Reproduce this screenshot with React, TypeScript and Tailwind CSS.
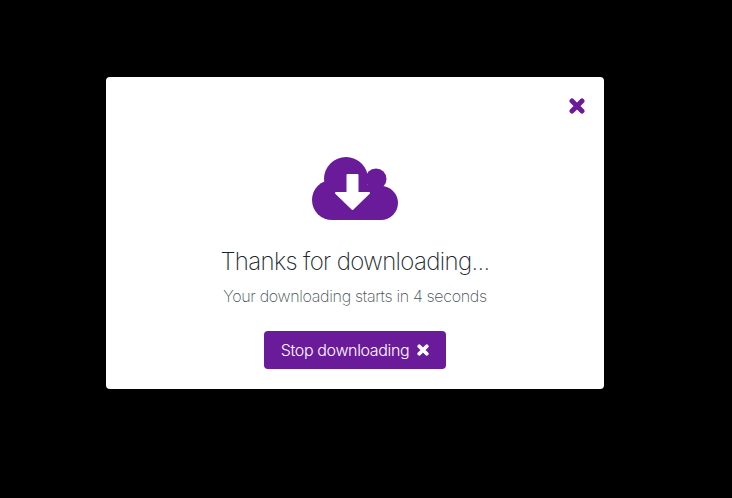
import React from "react";

function CloudIcon() {
    return (
        <svg width="86" height="63" viewBox="0 0 86 63" className="block">
            <g fill="#6a1b9a">
                <circle cx="34" cy="22" r="22" />
                <circle cx="64" cy="22" r="10.5" />
                <circle cx="20" cy="43" r="20" />
                <circle cx="69" cy="46" r="17" />
                <rect x="20" y="28" width="49" height="35" />
            </g>
            <path
                d="M35.5 18H45.5V36H57L40.5 52L24 36H35.5Z"
                fill="#fff"
                stroke="#fff"
                strokeWidth="2"
                strokeLinejoin="round"
            />
        </svg>
    );
}

function CrossIcon({ className }: { className: string }) {
    return (
        <svg viewBox="0 0 16 16" className={className}>
            <path d="M3 3L13 13M13 3L3 13" stroke="currentColor" strokeWidth="5" strokeLinecap="round" fill="none" />
        </svg>
    );
}

export default function App() {
    return (
        <div className="h-[498px] w-[732px] overflow-hidden bg-black pl-[106px] pt-[77px] font-['Inter','Liberation_Sans',sans-serif]">
            <div className="relative flex h-[312px] w-[498px] flex-col items-center rounded-[4px] bg-white pt-[80px]">
                <button className="absolute right-[19px] top-[21px] text-[#6a1b9a]">
                    <CrossIcon className="block h-[16px] w-[16px]" />
                </button>
                <CloudIcon />
                <h2 className="mt-[27px] text-[24px] leading-[30px] font-extralight tracking-[-0.64px] text-[#212529]">
                    Thanks for downloading...
                </h2>
                <p className="mt-[9px] text-[16px] leading-[20px] font-extralight tracking-[-0.31px] text-[#495057]">
                    Your downloading starts in 4 seconds
                </p>
                <button className="mt-[25px] flex h-[38px] w-[182px] items-center justify-center gap-[8px] rounded-[4px] bg-[#6a1b9a] text-[16px] font-light tracking-[-0.36px] text-white">
                    Stop downloading
                    <CrossIcon className="block h-[12px] w-[12px]" />
                </button>
            </div>
        </div>
    );
}
